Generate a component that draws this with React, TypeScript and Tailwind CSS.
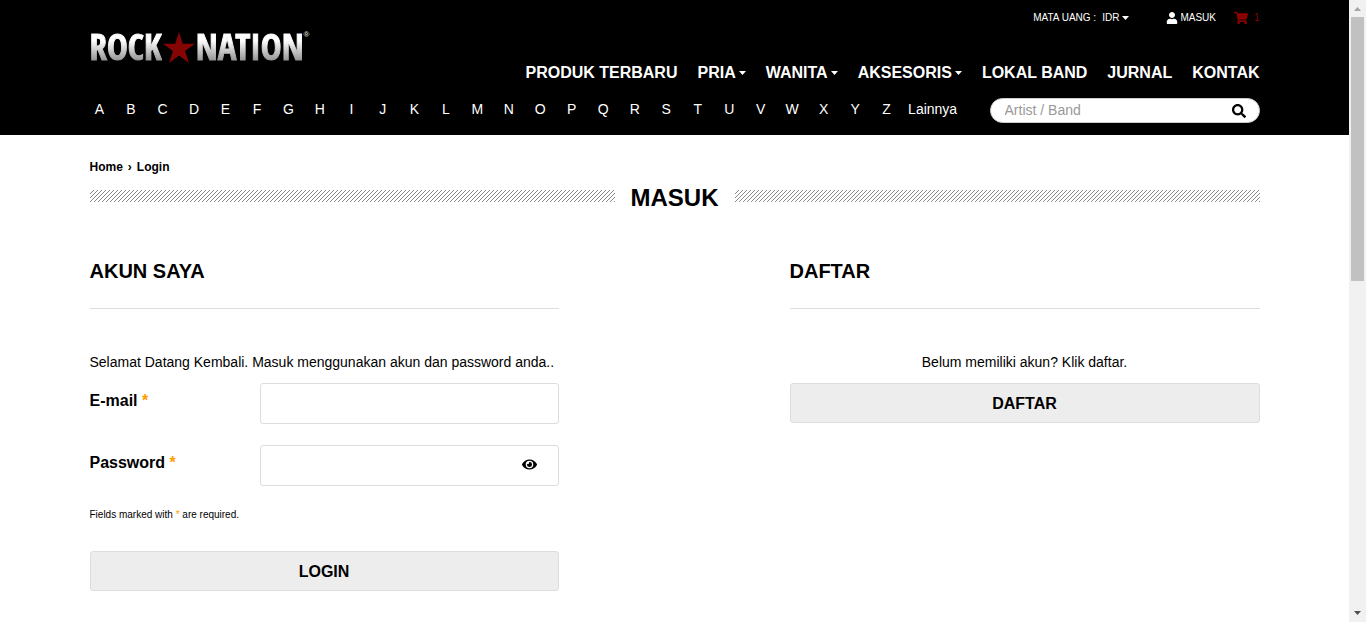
import type { ReactNode } from "react";
import { FaEye, FaSearch, FaShoppingCart, FaUser } from "react-icons/fa";

const LETTERS = "ABCDEFGHIJKLMNOPQRSTUVWXYZ".split("");

const NAV = [
  { label: "PRODUK TERBARU", menu: false },
  { label: "PRIA", menu: true },
  { label: "WANITA", menu: true },
  { label: "AKSESORIS", menu: true },
  { label: "LOKAL BAND", menu: false },
  { label: "JURNAL", menu: false },
  { label: "KONTAK", menu: false },
];

function Caret() {
  return (
    <svg viewBox="0 0 7 4" className="h-1 w-[7px] fill-current" aria-hidden="true">
      <path d="M0 0h7L3.500 4z" />
    </svg>
  );
}

function Logo() {
  const word =
    "bg-linear-to-b from-white from-30% to-[#999] to-90% bg-clip-text text-transparent [-webkit-text-stroke:1px_transparent]";
  return (
    <a
      href="#home"
      aria-label="Rock Nation"
      className="flex h-8 items-center font-['Noto_Sans_ExtraCondensed','Open_Sans_Condensed','Roboto_Condensed','Liberation_Sans_Narrow',sans-serif] text-[35px] leading-8 font-black"
    >
      <span className={word}>ROCK</span>
      <svg viewBox="0 0 32 31" className="mx-px h-[31px] w-8" aria-hidden="true">
        <path
          d="M16 0l3.8 11.8H32l-9.9 7.3L25.9 31 16 23.6 6.1 31l3.8-11.9L0 11.8h12.2z"
          fill="#850505"
        />
      </svg>
      <span className={word}>NATION</span>
      <span className="self-start font-['Liberation_Sans',sans-serif] text-[8px] leading-2 text-[#ccc]">
        ®
      </span>
    </a>
  );
}

function Hatch() {
  return (
    <div className="h-3 min-w-0 flex-1">
      <svg className="block h-3 w-full" aria-hidden="true" shapeRendering="crispEdges">
        <defs>
          <pattern id="hatch" width="4" height="4" patternUnits="userSpaceOnUse">
            <path d="M3 0h1v1h-1zM2 1h1v1h-1zM1 2h1v1h-1zM0 3h1v1h-1z" fill="#888" />
          </pattern>
        </defs>
        <rect width="100%" height="12" fill="url(#hatch)" />
      </svg>
    </div>
  );
}

function SectionTitle({ children }: { children: ReactNode }) {
  return (
    <h2 className="border-b border-[#ddd] pb-[23px] text-xl leading-7 font-bold">
      {children}
    </h2>
  );
}

function Star() {
  return <span className="text-[#ff9c00]">*</span>;
}

function Field({
  id,
  label,
  type,
  children,
}: {
  id: string;
  label: string;
  type: string;
  children?: ReactNode;
}) {
  return (
    <div className="flex">
      <label htmlFor={id} className="w-[170px] pt-1.5 text-base leading-6 font-bold">
        {label} <Star />
      </label>
      <div className="relative flex-1">
        <input
          id={id}
          type={type}
          className="h-[41px] w-full rounded-[3px] border border-[#ddd] bg-white px-3 text-sm outline-none"
        />
        {children}
      </div>
    </div>
  );
}

function ActionButton({ children }: { children: ReactNode }) {
  return (
    <button
      type="button"
      className="h-10 w-full rounded-[3px] border border-[#ddd] bg-[#ededed] pt-0.5 text-base font-bold"
    >
      {children}
    </button>
  );
}

function Scrollbar() {
  return (
    <div
      aria-hidden="true"
      className="sticky top-0 flex h-screen w-[17px] flex-col items-center bg-[#f1f1f1]"
    >
      <svg viewBox="0 0 17 17" className="h-[17px] w-[17px]">
        <path d="M5 11h7L8.500 7z" fill="#a3a3a3" />
      </svg>
      <div className="h-[264px] w-[13px] bg-[#c1c1c1]" />
      <svg viewBox="0 0 17 17" className="mt-auto h-[17px] w-[17px]">
        <path d="M5 6h7l-3.500 4z" fill="#505050" />
      </svg>
    </div>
  );
}

export default function App() {
  return (
    <div className="flex min-h-screen items-start bg-white font-['Liberation_Sans',Arial,sans-serif] text-black">
      <div className="min-w-0 flex-1">
        <header className="bg-black text-white">
          <div className="mx-auto flex max-w-[1170px] flex-col pb-3">
            <div className="flex justify-between">
              <div className="pt-[31px]">
                <Logo />
              </div>
              <div className="flex flex-col items-end">
                <div className="flex h-[35px] items-center text-[10px]">
                  <span className="mr-1.5">MATA UANG :</span>
                  <button type="button" className="mr-[37px] flex items-center gap-[3px]">
                    IDR <Caret />
                  </button>
                  <a href="#masuk" className="mr-[18px] flex items-center gap-0.5">
                    <FaUser className="size-3" /> MASUK
                  </a>
                  <a href="#cart" className="flex items-center gap-1.5 text-[#8b0000]">
                    <FaShoppingCart className="size-3.5" /> 1
                  </a>
                </div>
                <nav className="flex gap-5 pt-[26px] text-base leading-6 font-bold">
                  {NAV.map((item) => (
                    <a
                      key={item.label}
                      href={"#" + item.label.toLowerCase().replace(" ", "-")}
                      className="flex items-center gap-[3px]"
                    >
                      {item.label}
                      {item.menu && <Caret />}
                    </a>
                  ))}
                </nav>
              </div>
            </div>
            <div className="flex items-center pt-[13px]">
              <ul className="mr-8 flex flex-1 justify-between pb-[3px] text-sm leading-5">
                {LETTERS.map((letter) => (
                  <li key={letter} className="w-5 text-center">
                    <a href={"#" + letter}>{letter}</a>
                  </li>
                ))}
                <li>
                  <a href="#lainnya">Lainnya</a>
                </li>
              </ul>
              <form className="flex h-[25px] w-[270px] items-center rounded-full border border-[#ccc] bg-white pr-[13px] pl-3.5">
                <input
                  type="text"
                  aria-label="Artist / Band"
                  placeholder="Artist / Band"
                  className="min-w-0 flex-1 pb-0.5 text-sm text-black outline-none placeholder:text-[#999]"
                />
                <button type="button" aria-label="Cari" className="text-black">
                  <FaSearch className="size-3.5" />
                </button>
              </form>
            </div>
          </div>
        </header>

        <main className="mx-auto max-w-[1170px]">
          <nav className="flex gap-[5px] pt-6 text-xs leading-4 font-bold">
            <a href="#home">Home</a>
            <span>›</span>
            <a href="#login">Login</a>
          </nav>

          <div className="flex items-center gap-4 pt-[5px]">
            <Hatch />
            <h1 className="pt-1 text-2xl leading-7 font-bold">MASUK</h1>
            <Hatch />
          </div>

          <div className="flex justify-between pt-[45px]">
            <section className="w-[469px]">
              <SectionTitle>AKUN SAYA</SectionTitle>
              <form>
                <p className="pt-[43px] pb-[11px] text-sm leading-5">
                  Selamat Datang Kembali. Masuk menggunakan akun dan password anda..
                </p>
                <div className="flex flex-col gap-[21px]">
                  <Field id="email" label="E-mail" type="email" />
                  <Field id="password" label="Password" type="password">
                    <button
                      type="button"
                      aria-label="Tampilkan password"
                      className="absolute top-3 right-[22px]"
                    >
                      <FaEye className="size-[15px]" />
                    </button>
                  </Field>
                </div>
                <p className="pt-[21px] pb-7 text-[10px] leading-4">
                  Fields marked with <Star /> are required.
                </p>
                <ActionButton>LOGIN</ActionButton>
              </form>
            </section>

            <section className="w-[470px]">
              <SectionTitle>DAFTAR</SectionTitle>
              <p className="pt-[43px] pb-[11px] text-center text-sm leading-5">
                Belum memiliki akun? Klik daftar.
              </p>
              <ActionButton>DAFTAR</ActionButton>
            </section>
          </div>
        </main>
      </div>
      <Scrollbar />
    </div>
  );
}
